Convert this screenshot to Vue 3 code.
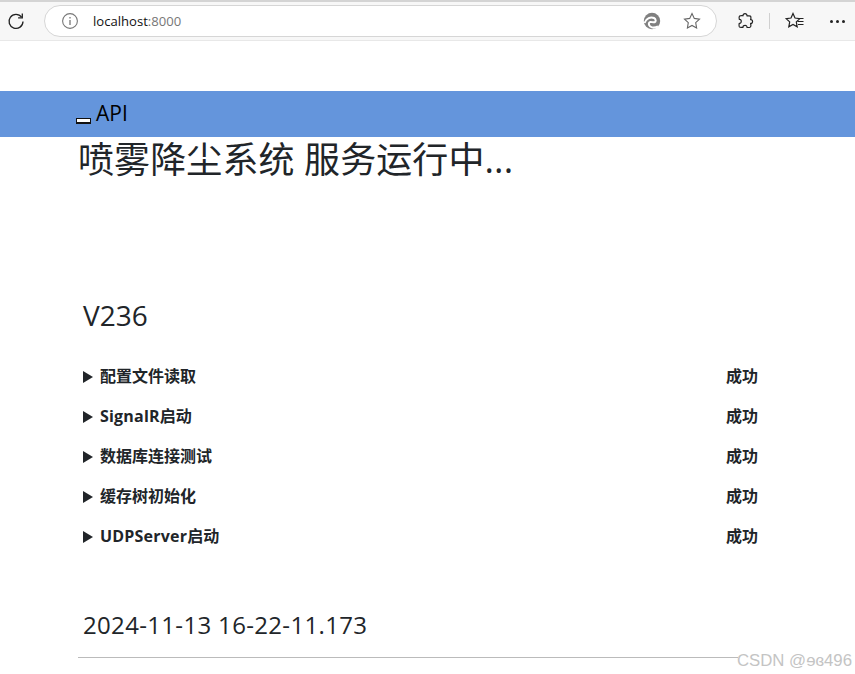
<template>
  <div class="page">
    <header class="chrome">
      <svg class="reload" width="20" height="20" viewBox="0 0 20 20" fill="none" stroke="#222" stroke-width="1.3"><path d="M15.6 6.2A7 7 0 1 0 17 10.5"/><path d="M16.3 2.6v4.2h-4.2"/></svg>
      <div class="omnibox">
        <svg width="18" height="18" viewBox="0 0 18 18" fill="none" stroke="#777" stroke-width="1.1"><circle cx="9" cy="9" r="7.4"/><path d="M9 8v5M9 5v1.4" stroke-width="1.3"/></svg>
        <span class="url">localhost<span class="port">:8000</span></span>
        <span class="spacer"></span>
        <svg class="edge" width="18" height="18" viewBox="0 0 18 18"><circle cx="9" cy="9" r="8.2" fill="#808080"/><path d="M1.500 11C3 6 8 4.500 11 6c2 1 2.200 3.600.6 4.200-1.400.5-3-.5-4.400-.2-1.800.4-1.800 2.800-.2 4.200 1.800 1.500 5 1.800 8 .2" fill="none" stroke="#fff" stroke-width="2"/></svg>
        <svg width="20" height="20" viewBox="0 0 20 20" fill="none" stroke="#666" stroke-width="1.100"><path d="M10 2.600l2.300 4.800 5.200.7-3.800 3.600.9 5.200-4.600-2.500-4.600 2.500.9-5.200-3.800-3.600 5.200-.7z"/></svg>
      </div>
      <svg class="puzzle" width="20" height="20" viewBox="0 0 20 20" fill="none" stroke="#222" stroke-width="1.200" stroke-linejoin="round"><path d="M8 4.800C7.600 2 12.400 2 12 4.800c1.500.3 3.600-.4 3.800.8.200 1 .1 2.400-.2 3 2.600-.4 2.600 4.400 0 3.800.4 1.500.2 3.400-.6 3.800-1 .4-2.200.3-3 .1.400-2.600-4.200-2.600-4 0-1.400.2-3.300.2-3.700-.6-.4-.9-.3-2.400-.1-3.300 2.600.5 2.800-4.400.1-4-.3-1.400-.3-2.900.3-3.400.9-.5 2.500-.5 3.400-.2z"/></svg>
      <span class="divider"></span>
      <svg class="favs" width="22" height="20" viewBox="0 0 22 20" fill="none" stroke="#222" stroke-width="1.200"><path d="M9 2.500l2 4.500 4.800.6-3.500 3.300.9 4.900L9 13.400l-4.200 2.400.9-4.900-3.500-3.300L7 7z"/><path d="M13.500 10.500h6M14 13.500h5.500M15 7.500h4.500"/></svg>
      <span class="more"><i></i><i></i><i></i></span>
    </header>

    <main class="content">
      <div class="navbar">
        <span class="broken-img"></span>
        <span class="brand">API</span>
      </div>
      <div class="body">
        <h1 class="title">喷雾降尘系统 服务运行中...</h1>
        <section class="status">
          <h2 class="version">V236</h2>
          <div v-for="row in rows" :key="row.cjk" class="row">
            <span class="caret"></span>
            <span class="name"><span class="latin">{{ row.latin }}</span>{{ row.cjk }}</span>
            <span class="ok">成功</span>
          </div>
          <h3 class="stamp">2024-11-13 16-22-11.173</h3>
        </section>
        <hr class="rule" />
      </div>
    </main>
    <div class="watermark">CSDN @ɘɞ496</div>
  </div>
</template>

<script setup>
const rows = [
  { latin: '', cjk: '配置文件读取' },
  { latin: 'SignalR', cjk: '启动' },
  { latin: '', cjk: '数据库连接测试' },
  { latin: '', cjk: '缓存树初始化' },
  { latin: 'UDPServer', cjk: '启动' }
]
</script>

<style>
html, body { margin: 0; background: #fff; overflow: hidden; }
</style>

<style scoped>
.page {
  position: relative;
  width: 855px;
  height: 674px;
  overflow: hidden;
  font-family: "Open Sans", "Noto Sans CJK SC", sans-serif;
  color: #212529;
}
.chrome {
  height: 41px;
  box-sizing: border-box;
  background: #f7f7f7;
  border-top: 2px solid #d4d4d4;
  border-bottom: 1px solid #e8e8e8;
  display: flex;
  align-items: center;
  padding-left: 6px;
}
.reload { margin-right: 18px; flex: none; }
.omnibox {
  width: 673px;
  height: 32px;
  box-sizing: border-box;
  background: #fff;
  border: 1px solid #d6d6d6;
  border-radius: 16px;
  display: flex;
  align-items: center;
  padding: 0 14px 0 16px;
  flex: none;
}
.url { margin-left: 14px; font-size: 13.1px; color: #111; font-family: "Open Sans", sans-serif; }
.port { color: #777; }
.spacer { flex: 1; }
.edge { margin-right: 21px; }
.puzzle { margin-left: 18px; flex: none; }
.divider { width: 1px; height: 16px; background: #d0d0d0; margin: 0 14px 0 14px; flex: none; }
.favs { flex: none; }
.more { display: flex; gap: 3px; margin-left: 24px; }
.more i { width: 3px; height: 3px; border-radius: 50%; background: #222; }
.content { padding-top: 50px; }
.navbar {
  height: 46px;
  background: #6495dc;
  display: flex;
  align-items: center;
  padding-left: 76px;
  color: #000;
}
.broken-img {
  width: 15px;
  height: 6px;
  box-sizing: border-box;
  border: 1px solid #111;
  border-bottom-width: 2px;
  background: #fff;
  margin: 14px 5px 0 0;
}
.brand { font-size: 21px; line-height: 26px; margin-top: -3px; }
.body { padding-left: 78px; }
.title { margin: 0; font-size: 36px; font-weight: 400; line-height: 46px; letter-spacing: .1px; }
.status { padding: 113px 0 0 5px; }
.version { margin: 0 0 21px; font-size: 28px; font-weight: 400; line-height: 38px; }
.row {
  height: 40px;
  display: flex;
  align-items: center;
  font-size: 16px;
  font-weight: 700;
}
.caret {
  width: 0;
  height: 0;
  border-left: 10px solid #212529;
  border-top: 6px solid transparent;
  border-bottom: 6px solid transparent;
  margin: 4px 7px 0 0;
}
.name { width: 626px; }
.latin { letter-spacing: .2px; }
.stamp { margin: 53px 0 0; font-size: 24px; font-weight: 400; line-height: 34px; letter-spacing: .33px; }
.rule { margin: 15px 0 0; border: 0; border-top: 1px solid #bbb; width: 660px; }
.watermark {
  position: absolute;
  right: 3px;
  top: 651px;
  font-family: "Liberation Sans", "Noto Sans CJK SC", sans-serif;
  font-size: 16.800px;
  color: #c4c4c4;
}
</style>
